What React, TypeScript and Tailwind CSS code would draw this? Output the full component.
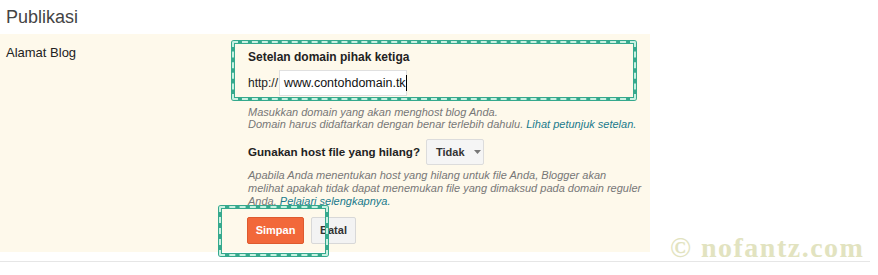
import React from "react";

function DashedBox({ className }: { className: string }) {
  return (
    <div className={"absolute pointer-events-none " + className}>
      <div className="absolute inset-0 rounded-[3px] border-[4px] border-[#35a98d]" />
      <div className="absolute inset-[1px] rounded-[2px] border-[2px] border-dashed border-[#c8f1e2]" />
    </div>
  );
}

export default function App() {
  return (
    <div className="relative w-[878px] h-[275px] bg-white overflow-hidden" style={{ fontFamily: '"Liberation Sans", Arial, sans-serif' }}>
      <div className="h-[34px] pl-[6px] pt-[4px] text-[18px] text-[#444]">Publikasi</div>
      <div className="flex w-[650px] h-[218px] bg-[#fef9eb]">
        <div className="w-[248px] shrink-0 pl-[6px] pt-[9px] text-[13px] text-[#222]">Alamat Blog</div>
        <div className="flex flex-col pt-[15px] min-w-0">
          <div className="text-[12px] font-bold text-[#222] leading-[16px]">Setelan domain pihak ketiga</div>
          <div className="flex items-center mt-[5px]">
            <span className="text-[12px] text-[#222] mr-[1px]">http://</span>
            <div className="w-[128px] h-[26px] bg-white border border-[#e0e0e0] flex items-center pl-[4px] text-[12.5px] text-[#111]">
              www.contohdomain.tk<span className="w-[1px] h-[16px] bg-black" />
            </div>
          </div>
          <div className="mt-[10px] text-[11px] italic text-[#777] leading-[12px] whitespace-nowrap">
            <div>Masukkan domain yang akan menghost blog Anda.</div>
            <div>Domain harus didaftarkan dengan benar terlebih dahulu. <span className="text-[#20798b]">Lihat petunjuk setelan.</span></div>
          </div>
          <div className="flex items-center mt-[9px]">
            <span className="text-[11.6px] font-bold text-[#222]">Gunakan host file yang hilang?</span>
            <div className="ml-[6px] w-[58px] h-[26px] bg-[#f5f5f5] border border-[#dcdcdc] rounded-[2px] flex items-center pl-[9px] text-[11px] font-bold text-[#333]">
              Tidak
              <svg className="ml-[9px]" width="7" height="4" viewBox="0 0 7 4"><path d="M0 0h7L3.5 4z" fill="#777" /></svg>
            </div>
          </div>
          <div className="mt-[4px] text-[11px] italic text-[#777] leading-[13px] whitespace-nowrap">
            Apabila Anda menentukan host yang hilang untuk file Anda, Blogger akan
            <br />
            melihat apakah tidak dapat menemukan file yang dimaksud pada domain reguler
            <br />
            Anda. <span className="text-[#20798b]">Pelajari selengkapnya.</span>
          </div>
          <div className="flex mt-[9px] gap-[7px] ml-[-1px]">
            <div className="w-[57px] h-[27px] bg-[#f2683a] border border-[#de5a2e] rounded-[2px] flex items-center justify-center text-[11px] font-bold text-white">Simpan</div>
            <div className="w-[45px] h-[27px] bg-[#f3f3f3] border border-[#d8d8d8] rounded-[2px] flex items-center justify-center text-[11px] font-bold text-[#333]">Batal</div>
          </div>
        </div>
      </div>
      <div className="mt-[9px] h-[1px] w-[870px] bg-[#e6e6e6]" />
      <DashedBox className="left-[231px] top-[40px] w-[406px] h-[61px]" />
      <DashedBox className="left-[218px] top-[205px] w-[111px] h-[52px]" />
      <div className="absolute left-[670px] top-[232px] text-[28px] font-bold tracking-[1.5px] text-[#e2e3c0] leading-[32px]" style={{ fontFamily: '"Liberation Serif", "Times New Roman", serif' }}>
        © nofantz.com
      </div>
    </div>
  );
}
